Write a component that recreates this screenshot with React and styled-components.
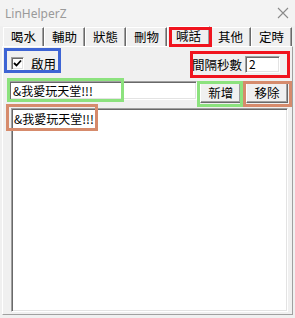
import React from 'react'
import styled, { createGlobalStyle } from 'styled-components'

const GlobalStyle = createGlobalStyle`
  html, body {
    margin: 0;
    padding: 0;
    background: #f0f0f0;
  }
  body {
    font-family: "Noto Sans CJK TC", "Noto Sans", sans-serif;
    font-size: 12px;
    color: #000;
  }
`

const Window = styled.div`
  position: relative;
  width: 295px;
  height: 318px;
  display: flex;
  flex-direction: column;
  background: #f0f0f0;
  overflow: hidden;
`

const TitleBar = styled.div`
  height: 26px;
  display: flex;
  align-items: center;
  justify-content: space-between;
  padding: 0 6px 0 5px;
  box-sizing: border-box;
  background: #f3f3f3;
`

const Title = styled.span`
  font-family: "Noto Sans", sans-serif;
  font-size: 12px;
  color: #9a9a9a;
`

const TabStrip = styled.div`
  display: flex;
  padding-left: 3px;
  height: 20px;
  align-items: flex-end;
`

const Tab = styled.div`
  width: ${p => p.w || 41}px;
  height: ${p => (p.active ? 20 : 19)}px;
  box-sizing: border-box;
  display: flex;
  align-items: center;
  justify-content: center;
  border-top: 1px solid #fff;
  border-left: 1px solid #fff;
  border-right: 1px solid #696969;
  box-shadow: inset -1px 0 #a0a0a0;
  background: #f0f0f0;
  line-height: 1;
  font-size: 12.5px;
`

const Panel = styled.div`
  flex: 1;
  margin: 0 2px 3px 2px;
  border-top: 1px solid #fff;
  border-left: 1px solid #fff;
  border-right: 1px solid #a0a0a0;
  border-bottom: 1px solid #a0a0a0;
  display: flex;
  flex-direction: column;
  padding: 7px 4px 2px 6px;
  box-sizing: border-box;
`

const TopRow = styled.div`
  display: flex;
  justify-content: space-between;
  align-items: center;
  height: 18px;
`

const CheckLabel = styled.label`
  display: flex;
  align-items: center;
  gap: 7px;
  padding-left: 2px;
  font-size: 12.5px;
`

const CheckBox = styled.span`
  width: 13px;
  height: 13px;
  box-sizing: border-box;
  background: #fff;
  border-top: 1px solid #a0a0a0;
  border-left: 1px solid #a0a0a0;
  border-right: 1px solid #fff;
  border-bottom: 1px solid #fff;
  box-shadow: inset 1px 1px #696969, inset -1px -1px #e3e3e3;
  display: flex;
  align-items: center;
  justify-content: center;
`

const Interval = styled.div`
  display: flex;
  align-items: center;
  gap: 3px;
  margin-right: 8px;
  margin-top: 2px;
  font-size: 12.5px;
`

const sunken = `
  box-sizing: border-box;
  background: #fff;
  border-top: 1px solid #a0a0a0;
  border-left: 1px solid #a0a0a0;
  border-right: 1px solid #fff;
  border-bottom: 1px solid #fff;
  box-shadow: inset 1px 1px #696969, inset -1px -1px #e3e3e3;
`

const Field = styled.div`
  ${sunken}
  width: ${p => p.w}px;
  height: ${p => p.h}px;
  display: flex;
  align-items: center;
  padding-left: 3px;
  font-size: 12px;
  line-height: 1;
`

const EditRow = styled.div`
  display: flex;
  align-items: flex-start;
  margin-top: 9px;
`

const Button = styled.div`
  width: ${p => p.w}px;
  height: 21px;
  margin-left: ${p => p.ml}px;
  margin-top: 1px;
  box-sizing: border-box;
  border-top: 1px solid #fff;
  border-left: 1px solid #fff;
  border-right: 1px solid #696969;
  border-bottom: 1px solid #696969;
  box-shadow: inset -1px -1px #a0a0a0;
  background: #f0f0f0;
  display: flex;
  align-items: center;
  justify-content: center;
  font-size: 12.5px;
`

const ListBox = styled.div`
  ${sunken}
  flex: 1;
  margin: 5px 0 0 2px;
  padding: 1px 2px;
  font-size: 12px;
`

const Mark = styled.div`
  position: absolute;
  box-sizing: border-box;
  border: 3px solid ${p => p.c};
  pointer-events: none;
`

const marks = [
  { x: 169, y: 27, w: 43, h: 20, c: '#f0141e' },
  { x: 4, y: 48, w: 57, h: 25, c: '#3d64d4' },
  { x: 190, y: 51, w: 100, h: 27, c: '#f0141e' },
  { x: 7, y: 78, w: 117, h: 24, c: '#8ce27e' },
  { x: 6, y: 104, w: 92, h: 27, c: '#d68b6c' },
  { x: 197, y: 81, w: 46, h: 26, c: '#8ce27e' },
  { x: 243, y: 81, w: 49, h: 26, c: '#d68b6c' },
]

const tabs = ['喝水', '輔助', '狀態', '刪物', '喊話', '其他', '定時']

export default function App() {
  return (
    <>
      <GlobalStyle />
      <Window>
        <TitleBar>
          <Title>LinHelperZ</Title>
          <svg width="12" height="12" viewBox="0 0 12 12">
            <path d="M1 1 L11 11 M11 1 L1 11" stroke="#8a8a8a" strokeWidth="1.1" />
          </svg>
        </TitleBar>
        <TabStrip>
          {tabs.map((t, i) => (
            <Tab key={t} active={i === 4} w={i === 4 ? 43 : 41}>{t}</Tab>
          ))}
        </TabStrip>
        <Panel>
          <TopRow>
            <CheckLabel>
              <CheckBox>
                <svg width="9" height="9" viewBox="0 0 9 9">
                  <path d="M1 4 L3.5 6.5 L8 1.5" stroke="#000" strokeWidth="1.8" fill="none" />
                </svg>
              </CheckBox>
              啟用
            </CheckLabel>
            <Interval>
              間隔秒數
              <Field w={35} h={17}>2</Field>
            </Interval>
          </TopRow>
          <EditRow>
            <Field w={189} h={19}>&amp;我愛玩天堂!!!</Field>
            <Button w={41} ml={3}>新增</Button>
            <Button w={42} ml={5}>移除</Button>
          </EditRow>
          <ListBox>&amp;我愛玩天堂!!!</ListBox>
        </Panel>
        {marks.map((m, i) => (
          <Mark key={i} c={m.c} style={{ left: m.x, top: m.y, width: m.w, height: m.h }} />
        ))}
      </Window>
    </>
  )
}
